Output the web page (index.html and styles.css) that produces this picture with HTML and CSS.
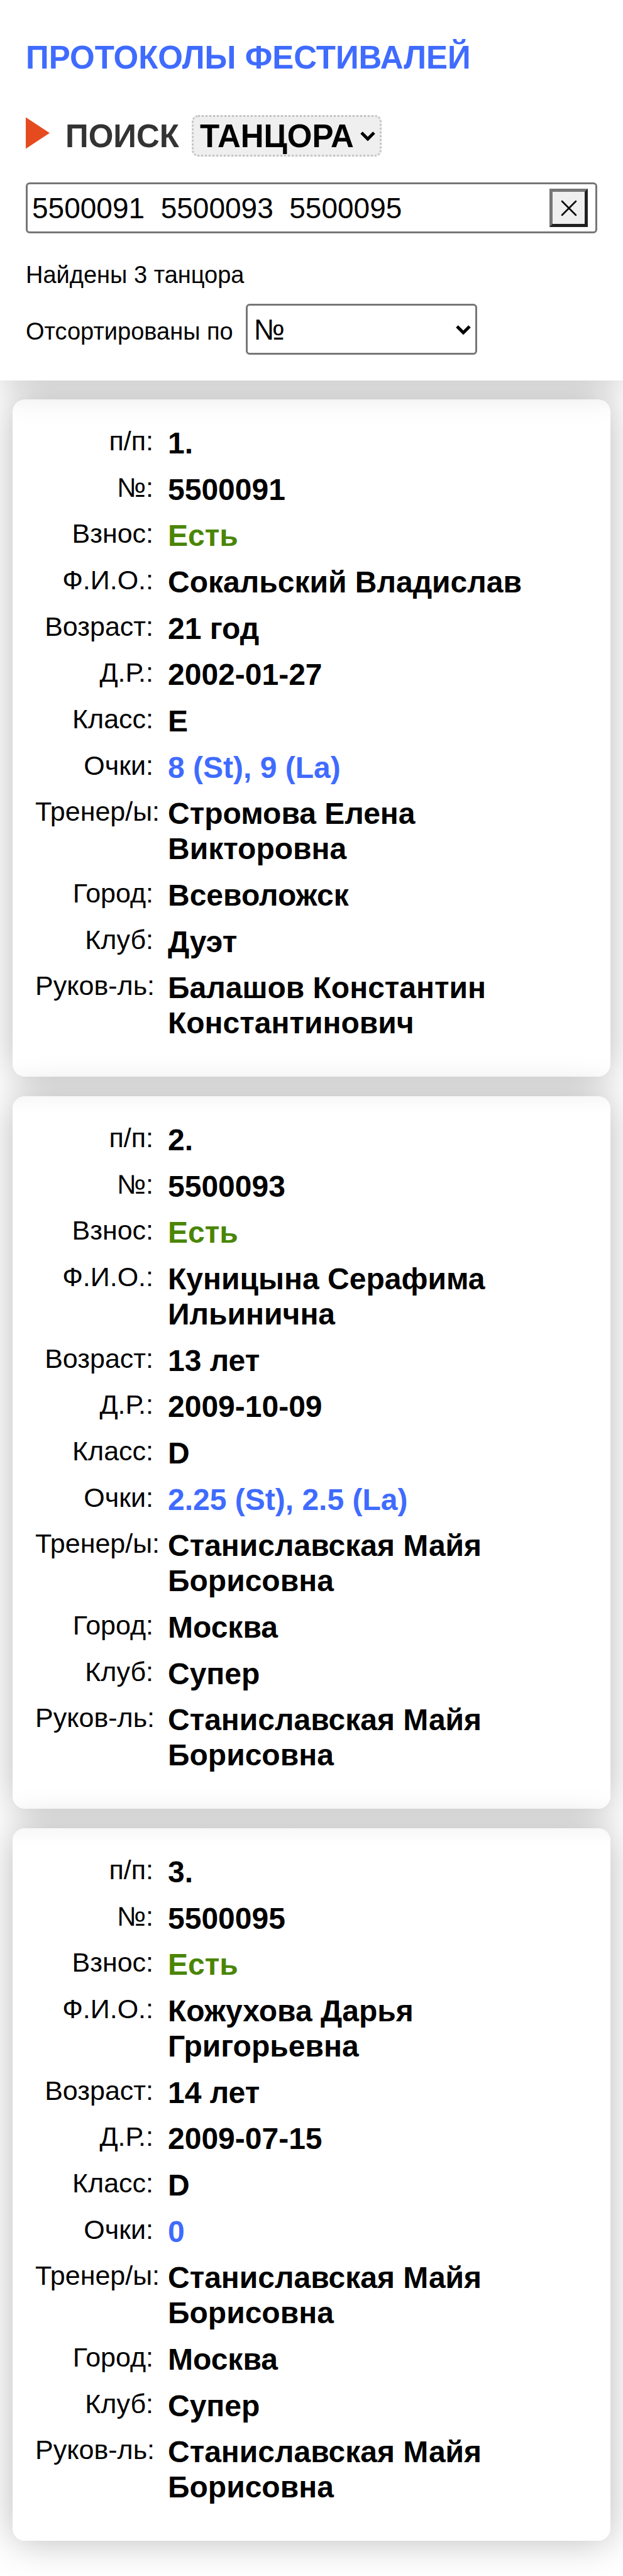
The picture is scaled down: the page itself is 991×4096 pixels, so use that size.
FILE: index.html
```html
<!DOCTYPE html>
<html lang="ru">
<head>
<meta charset="utf-8">
<meta name="viewport" content="width=device-width, initial-scale=1">
<title>Протоколы фестивалей</title>
<link rel="stylesheet" href="styles.css">
</head>
<body>
<header class="top">
  <h1 class="title"><a href="#" class="title-link">ПРОТОКОЛЫ ФЕСТИВАЛЕЙ</a></h1>
  <div class="search-head">
    <svg class="marker" viewBox="0 0 38 50" aria-hidden="true"><path d="M0 0L38 25L0 50Z" fill="#e64b20"/></svg>
    <label class="search-label" for="kind">ПОИСК</label>
    <span class="select-wrap">
      <select class="kind" id="kind"><option>ТАНЦОРА</option></select>
      <svg class="chevron" viewBox="0 0 24 16" aria-hidden="true"><path d="M2 2L12 12L22 2" fill="none" stroke="#000" stroke-width="5"/></svg>
    </span>
  </div>
  <div class="query-wrap">
    <input class="query" type="text" aria-label="Поиск" value="5500091&nbsp; 5500093&nbsp; 5500095">
    <button class="clear" type="button" aria-label="Очистить"><svg class="cross" viewBox="0 0 26 26" aria-hidden="true"><path d="M2 2L24 24M24 2L2 24" fill="none" stroke="#000" stroke-width="2.5" stroke-linecap="round"/></svg></button>
  </div>
  <p class="found">Найдены 3 танцора</p>
  <div class="sort-row">
    <label for="sort">Отсортированы по</label>
    <span class="select-wrap">
      <select class="sort" id="sort"><option>№</option></select>
      <svg class="chevron" viewBox="0 0 24 16" aria-hidden="true"><path d="M2 2L12 12L22 2" fill="none" stroke="#000" stroke-width="5"/></svg>
    </span>
  </div>
</header>
<main class="results">
  <dl class="card">
    <div class="field"><dt>п/п:</dt><dd>1.</dd></div>
    <div class="field"><dt>№:</dt><dd>5500091</dd></div>
    <div class="field"><dt>Взнос:</dt><dd class="paid">Есть</dd></div>
    <div class="field"><dt>Ф.И.О.:</dt><dd>Сокальский Владислав</dd></div>
    <div class="field"><dt>Возраст:</dt><dd>21 год</dd></div>
    <div class="field"><dt>Д.Р.:</dt><dd>2002-01-27</dd></div>
    <div class="field"><dt>Класс:</dt><dd>E</dd></div>
    <div class="field"><dt>Очки:</dt><dd><a href="#" class="points">8 (St), 9 (La)</a></dd></div>
    <div class="field"><dt>Тренер/ы:</dt><dd>Стромова Елена Викторовна</dd></div>
    <div class="field"><dt>Город:</dt><dd>Всеволожск</dd></div>
    <div class="field"><dt>Клуб:</dt><dd>Дуэт</dd></div>
    <div class="field"><dt>Руков-ль:</dt><dd>Балашов Константин Константинович</dd></div>
  </dl>
  <dl class="card">
    <div class="field"><dt>п/п:</dt><dd>2.</dd></div>
    <div class="field"><dt>№:</dt><dd>5500093</dd></div>
    <div class="field"><dt>Взнос:</dt><dd class="paid">Есть</dd></div>
    <div class="field"><dt>Ф.И.О.:</dt><dd>Куницына Серафима Ильинична</dd></div>
    <div class="field"><dt>Возраст:</dt><dd>13 лет</dd></div>
    <div class="field"><dt>Д.Р.:</dt><dd>2009-10-09</dd></div>
    <div class="field"><dt>Класс:</dt><dd>D</dd></div>
    <div class="field"><dt>Очки:</dt><dd><a href="#" class="points">2.25 (St), 2.5 (La)</a></dd></div>
    <div class="field"><dt>Тренер/ы:</dt><dd>Станиславская Майя Борисовна</dd></div>
    <div class="field"><dt>Город:</dt><dd>Москва</dd></div>
    <div class="field"><dt>Клуб:</dt><dd>Супер</dd></div>
    <div class="field"><dt>Руков-ль:</dt><dd>Станиславская Майя Борисовна</dd></div>
  </dl>
  <dl class="card">
    <div class="field"><dt>п/п:</dt><dd>3.</dd></div>
    <div class="field"><dt>№:</dt><dd>5500095</dd></div>
    <div class="field"><dt>Взнос:</dt><dd class="paid">Есть</dd></div>
    <div class="field"><dt>Ф.И.О.:</dt><dd>Кожухова Дарья Григорьевна</dd></div>
    <div class="field"><dt>Возраст:</dt><dd>14 лет</dd></div>
    <div class="field"><dt>Д.Р.:</dt><dd>2009-07-15</dd></div>
    <div class="field"><dt>Класс:</dt><dd>D</dd></div>
    <div class="field"><dt>Очки:</dt><dd><a href="#" class="points">0</a></dd></div>
    <div class="field"><dt>Тренер/ы:</dt><dd>Станиславская Майя Борисовна</dd></div>
    <div class="field"><dt>Город:</dt><dd>Москва</dd></div>
    <div class="field"><dt>Клуб:</dt><dd>Супер</dd></div>
    <div class="field"><dt>Руков-ль:</dt><dd>Станиславская Майя Борисовна</dd></div>
  </dl>
</main>
</body>
</html>
```

FILE: styles.css
```css
* { box-sizing: border-box; }

body {
  margin: 0;
  background: #fff;
  color: #000;
  font-family: "Liberation Sans", Arial, sans-serif;
  overflow-x: hidden;
}

.top {
  position: relative;
  z-index: 1;
  padding: 62px 41px 41px;
  background: #fff;
  box-shadow: 0 0 61px rgba(0, 0, 0, 0.25);
}

.title {
  margin: 0 0 62px;
  font-size: 51px;
  line-height: 59px;
}

.title-link, .points { color: #3f6bff; text-decoration: none; }

.search-head {
  display: flex;
  align-items: center;
  height: 66px;
  margin-bottom: 41px;
  font-size: 51px;
  font-weight: bold;
}

.marker { width: 38px; height: 51px; margin: 0 25px 10px 0; }

.search-label { margin-right: 20px; color: #333; }

.select-wrap { position: relative; display: inline-flex; }

select { appearance: none; margin: 0; font-family: inherit; color: #000; }

.kind {
  width: 302px;
  height: 66px;
  padding: 0 10px;
  border: 3px dotted #c3c3c3;
  border-radius: 10px;
  background: #efefef;
  font-size: 51px;
  font-weight: bold;
}

.chevron {
  position: absolute;
  right: 10px;
  top: calc(50% - 7px);
  width: 24px;
  height: 16px;
  pointer-events: none;
}

.query-wrap { position: relative; margin-bottom: 44px; }

.query {
  display: block;
  width: 100%;
  height: 81px;
  padding: 0 86px 0 7px;
  border: 3px solid #767676;
  border-radius: 6px;
  background: #fff;
  color: #000;
  font-family: inherit;
  font-size: 46px;
}

.clear {
  position: absolute;
  top: 10px;
  right: 15px;
  display: grid;
  place-items: center;
  width: 61px;
  height: 61px;
  padding: 0;
  border: 5px solid;
  border-color: #767676 #212121 #212121 #767676;
  background: #efefef;
}

.cross { width: 26px; height: 26px; }

.found { margin: 0 0 24px; font-size: 38px; line-height: 44px; }

.sort-row {
  display: flex;
  align-items: baseline;
  gap: 20px;
  font-size: 38px;
}

.sort {
  width: 368px;
  height: 81px;
  padding: 0 10px;
  border: 3px solid #767676;
  border-radius: 6px;
  background: #fff;
  font-size: 46px;
}

.results {
  display: flex;
  flex-direction: column;
  gap: 31px;
  padding: 30px 20px 56px;
}

.card {
  margin: 0;
  padding: 42px 36px 57px;
  border-radius: 20px;
  background: #fff;
  box-shadow: 0 0 61px rgba(0, 0, 0, 0.28);
}

.card + .card { background: linear-gradient(#f8f8f8, #fff 26px); }

.field { display: flex; gap: 23px; }

.field + .field { margin-top: 18px; }

.field:nth-child(3n) { margin-top: 17px; }

.field dt {
  flex: none;
  display: flex;
  justify-content: safe flex-end;
  width: 188px;
  font-size: 43px;
  line-height: 48px;
  white-space: nowrap;
}

.field dd {
  flex: 1;
  margin: 0;
  font-size: 48px;
  font-weight: bold;
  line-height: 56px;
}

.field .paid { color: #4a8505; }
```
